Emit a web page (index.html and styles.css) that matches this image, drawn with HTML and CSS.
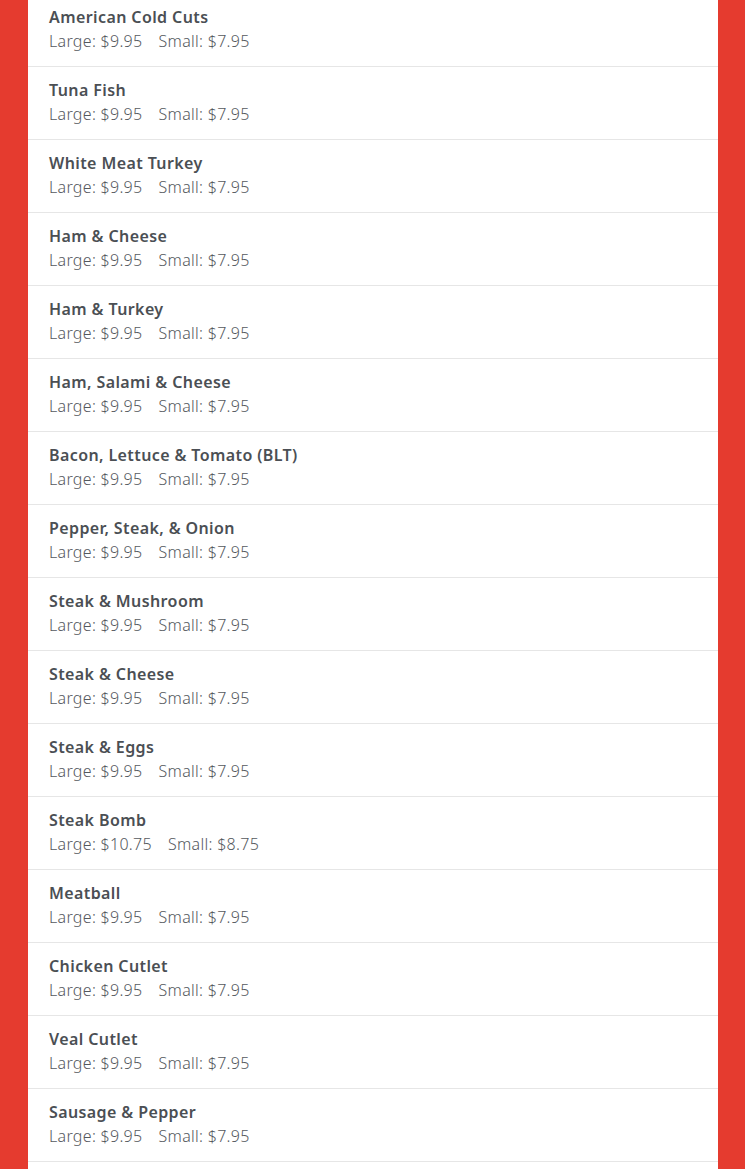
FILE: index.html
```html
<!DOCTYPE html>
<html>
<head>
<meta charset="utf-8">
<link rel="stylesheet" href="styles.css">
</head>
<body>
<div class="card">
  <ul class="menu">
    <li class="item"><div class="name">American Cold Cuts</div><div class="prices"><span>Large: $9.95</span><span>Small: $7.95</span></div></li>
    <li class="item"><div class="name">Tuna Fish</div><div class="prices"><span>Large: $9.95</span><span>Small: $7.95</span></div></li>
    <li class="item"><div class="name">White Meat Turkey</div><div class="prices"><span>Large: $9.95</span><span>Small: $7.95</span></div></li>
    <li class="item"><div class="name">Ham &amp; Cheese</div><div class="prices"><span>Large: $9.95</span><span>Small: $7.95</span></div></li>
    <li class="item"><div class="name">Ham &amp; Turkey</div><div class="prices"><span>Large: $9.95</span><span>Small: $7.95</span></div></li>
    <li class="item"><div class="name">Ham, Salami &amp; Cheese</div><div class="prices"><span>Large: $9.95</span><span>Small: $7.95</span></div></li>
    <li class="item"><div class="name">Bacon, Lettuce &amp; Tomato (BLT)</div><div class="prices"><span>Large: $9.95</span><span>Small: $7.95</span></div></li>
    <li class="item"><div class="name">Pepper, Steak, &amp; Onion</div><div class="prices"><span>Large: $9.95</span><span>Small: $7.95</span></div></li>
    <li class="item"><div class="name">Steak &amp; Mushroom</div><div class="prices"><span>Large: $9.95</span><span>Small: $7.95</span></div></li>
    <li class="item"><div class="name">Steak &amp; Cheese</div><div class="prices"><span>Large: $9.95</span><span>Small: $7.95</span></div></li>
    <li class="item"><div class="name">Steak &amp; Eggs</div><div class="prices"><span>Large: $9.95</span><span>Small: $7.95</span></div></li>
    <li class="item"><div class="name">Steak Bomb</div><div class="prices"><span>Large: $10.75</span><span>Small: $8.75</span></div></li>
    <li class="item"><div class="name">Meatball</div><div class="prices"><span>Large: $9.95</span><span>Small: $7.95</span></div></li>
    <li class="item"><div class="name">Chicken Cutlet</div><div class="prices"><span>Large: $9.95</span><span>Small: $7.95</span></div></li>
    <li class="item"><div class="name">Veal Cutlet</div><div class="prices"><span>Large: $9.95</span><span>Small: $7.95</span></div></li>
    <li class="item"><div class="name">Sausage &amp; Pepper</div><div class="prices"><span>Large: $9.95</span><span>Small: $7.95</span></div></li>
  </ul>
</div>
</body>
</html>
```
FILE: styles.css
```css
html, body {
  margin: 0;
  padding: 0;
  background: #e53b2f;
  height: 100%;
  overflow: hidden;
}
.card {
  display: flow-root;
  margin-left: 28px;
  width: 690px;
  background: #fff;
  min-height: 100%;
}
.menu {
  list-style: none;
  margin: -6px 0 0 0;
  padding: 0;
  font-family: "Noto Sans", "Liberation Sans", sans-serif;
}
.item {
  border-bottom: 1px solid #e6e6e6;
  padding: 11px 21px 13px;
  height: 48px;
}
.name {
  font-size: 16px;
  line-height: 24px;
  font-weight: 600;
  letter-spacing: 0.4px;
  color: #4b4f54;
}
.prices {
  display: flex;
  gap: 16px;
  font-size: 16px;
  line-height: 24px;
  font-weight: 300;
  letter-spacing: 0.3px;
  color: #55595e;
}
```
